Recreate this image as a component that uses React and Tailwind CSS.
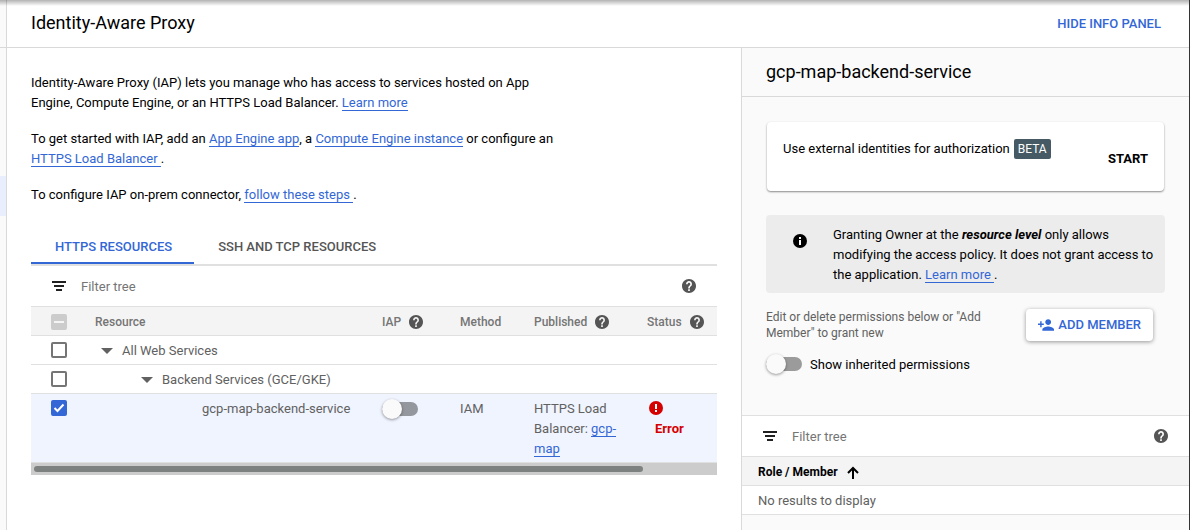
import { useState } from "react";

function HelpIcon() {
  return (
    <svg viewBox="2 2 20 20" className="size-3.5 shrink-0 fill-[#555555]" aria-hidden="true">
      <path d="M12 2C6.48 2 2 6.48 2 12s4.48 10 10 10 10-4.48 10-10S17.52 2 12 2zm1.2 17h-2.4v-2.4h2.4V19zm2.3-7.5-.9.92c-.82.82-1.4 1.4-1.4 3.08h-2.4v-.6c0-1.1.5-2 1.2-2.8l1.3-1.3c.4-.35.6-.8.6-1.4 0-1-.9-1.9-1.9-1.9s-1.9.9-1.9 1.9H7.8C7.800 6.900 9.700 5 12 5s4.200 1.900 4.200 4.200c0 .9-.3 1.700-.7 2.300z" />
    </svg>
  );
}

function HelpButton({ label }) {
  return (
    <button type="button" aria-label={label} className="flex shrink-0 cursor-pointer">
      <HelpIcon />
    </button>
  );
}

function FilterIcon() {
  return (
    <svg viewBox="0 0 14 10" className="h-2.5 w-3.5 shrink-0 fill-[#212121]" aria-hidden="true">
      <path d="M0 0h14v2H0zM2 4h10v2H2zM4 8h6v2H4z" />
    </svg>
  );
}

function Caret() {
  return (
    <svg viewBox="0 0 12 6" className="h-1.5 w-3 fill-[#616161]" aria-hidden="true">
      <path d="M0 0h12L6 6z" />
    </svg>
  );
}

function TextLink({ children }) {
  return (
    <a href="#" className="border-b border-[#3367d6] text-[#3367d6]">
      {children}
    </a>
  );
}

function Checkbox({ label, defaultChecked = false }) {
  return (
    <span className="relative flex size-4">
      <input
        type="checkbox"
        aria-label={label}
        defaultChecked={defaultChecked}
        className="peer size-4 appearance-none rounded-xs border-2 border-[#757575] bg-white checked:border-[#3367d6] checked:bg-[#3367d6]"
      />
      <svg
        viewBox="0 0 16 16"
        className="pointer-events-none absolute inset-0 hidden size-4 fill-none stroke-white stroke-2 peer-checked:block"
        aria-hidden="true"
      >
        <path d="M3.500 8l3 3L12.500 4.500" />
      </svg>
    </span>
  );
}

function MixedCheckbox({ label }) {
  return (
    <span className="relative flex size-4">
      <input
        type="checkbox"
        disabled
        aria-label={label}
        className="size-4 appearance-none rounded-xs bg-[#cccccc]"
      />
      <svg viewBox="0 0 16 16" className="pointer-events-none absolute inset-0 size-4 fill-[#f4f4f4]" aria-hidden="true">
        <path d="M3 7h10v2H3z" />
      </svg>
    </span>
  );
}

function Toggle({ id, label }) {
  return (
    <span className="relative flex h-5 w-9 items-center">
      <input
        id={id}
        type="checkbox"
        role="switch"
        aria-label={label}
        className="peer h-3.5 w-9 appearance-none rounded-full bg-black/38 checked:bg-[#3367d6]/50"
      />
      <span className="pointer-events-none absolute top-0 left-0 size-5 rounded-full bg-[#fafafa] shadow-[0_1px_3px_rgba(0,0,0,0.4)] peer-checked:left-4" />
    </span>
  );
}

function FilterBar({ id, className }) {
  return (
    <div className={"flex h-10 items-center bg-white " + className}>
      <label htmlFor={id} aria-label="Filter tree" className="shrink-0">
        <FilterIcon />
      </label>
      <input
        id={id}
        type="text"
        placeholder="Filter tree"
        className="ml-[15px] min-w-0 flex-1 pt-0.5 outline-none placeholder:text-[#757575]"
      />
      <HelpButton label="Filter help" />
    </div>
  );
}

function Intro() {
  return (
    <div className="flex max-w-[530px] flex-col gap-4">
      <p>
        Identity-Aware Proxy (IAP) lets you manage who has access to services hosted on App Engine,
        Compute Engine, or an HTTPS Load Balancer. <TextLink>Learn more</TextLink>
      </p>
      <p>
        To get started with IAP, add an <TextLink>App Engine app</TextLink>, a{" "}
        <TextLink>Compute Engine instance</TextLink> or configure an{" "}
        <TextLink>HTTPS Load Balancer </TextLink>.
      </p>
      <p>
        To configure IAP on-prem connector, <TextLink>follow these steps </TextLink>.
      </p>
    </div>
  );
}

function Tabs() {
  const [active, setActive] = useState("HTTPS RESOURCES");
  return (
    <div role="tablist" className="mt-6 flex border-b-2 border-[#e0e0e0]">
      {["HTTPS RESOURCES", "SSH AND TCP RESOURCES"].map((name) => (
        <button
          key={name}
          type="button"
          role="tab"
          aria-selected={active === name}
          onClick={() => setActive(name)}
          className="h-[35px] cursor-pointer border-b-2 border-transparent px-6 pt-0.5 font-medium text-[#555555] first:pr-[22px] aria-selected:border-[#3367d6] aria-selected:text-[#3367d6]"
        >
          {name}
        </button>
      ))}
    </div>
  );
}

const cell = "border-b border-[#e0e0e0] pt-[5px] pb-[3px] align-top";
const checkCell = "border-b border-[#e0e0e0] pt-1.5 pb-1.5 pl-5 align-top";
const head =
  "border-y border-[#e0e0e0] bg-[#f4f4f4] pt-[5px] pb-[3px] text-left text-xs/5 font-medium text-[#757575]";

function ResourceTable() {
  return (
    <table className="w-full table-fixed border-separate border-spacing-0 text-[#616161]">
      <colgroup>
        <col className="w-16" />
        <col />
        <col className="w-[78px]" />
        <col className="w-[74px]" />
        <col className="w-[113px]" />
        <col className="w-[70px]" />
      </colgroup>
      <thead>
        <tr>
          <th className={head + " pl-5"}>
            <div className="flex h-5 items-center">
              <MixedCheckbox label="Select all resources" />
            </div>
          </th>
          <th className={head}>Resource</th>
          <th className={head}>
            <span className="flex items-center gap-2">
              IAP <HelpButton label="About IAP" />
            </span>
          </th>
          <th className={head}>Method</th>
          <th className={head}>
            <span className="flex items-center gap-2">
              Published <HelpButton label="About published" />
            </span>
          </th>
          <th className={head}>
            <span className="flex items-center gap-2">
              Status <HelpButton label="About status" />
            </span>
          </th>
        </tr>
      </thead>
      <tbody>
        <tr>
          <td className={checkCell}>
            <Checkbox label="Select All Web Services" />
          </td>
          <td className={cell} colSpan={5}>
            <div className="flex items-center gap-[9px] pl-1.5">
              <button type="button" aria-label="Collapse All Web Services">
                <Caret />
              </button>
              All Web Services
            </div>
          </td>
        </tr>
        <tr>
          <td className={checkCell}>
            <Checkbox label="Select Backend Services" />
          </td>
          <td className={cell} colSpan={5}>
            <div className="flex items-center gap-[9px] pl-[46px]">
              <button type="button" aria-label="Collapse Backend Services">
                <Caret />
              </button>
              Backend Services (GCE/GKE)
            </div>
          </td>
        </tr>
        <tr className="bg-[#f0f4ff]">
          <td className={checkCell}>
            <Checkbox label="Select gcp-map-backend-service" defaultChecked />
          </td>
          <td className={cell + " pl-[107px]"}>gcp-map-backend-service</td>
          <td className={cell}>
            <Toggle id="iap-toggle" label="IAP for gcp-map-backend-service" />
          </td>
          <td className={cell}>IAM</td>
          <td className={cell + " pr-6"}>
            HTTPS Load Balancer: <TextLink>gcp-map</TextLink>
          </td>
          <td className={cell}>
            <div className="flex h-5 items-center pb-0.5 pl-0.5">
              <svg viewBox="0 0 14 14" className="size-3.5 fill-[#d50000]" aria-hidden="true">
                <circle cx="7" cy="7" r="7" />
                <path d="M6 3h2v5H6zM6 9h2v2H6z" className="fill-white" />
              </svg>
            </div>
            <div className="pl-2 font-bold text-[#d50000]">Error</div>
          </td>
        </tr>
      </tbody>
    </table>
  );
}

function InfoPanel() {
  return (
    <aside className="flex w-[448px] shrink-0 flex-col border-l border-[#d9d9d9] bg-[#fafafa]">
      <h2 className="border-b border-[#d9d9d9] px-6 py-3 text-lg/6">gcp-map-backend-service</h2>
      <div className="px-6 pt-6 pb-10">
        <div className="m-px flex items-center justify-between rounded-sm bg-white px-4 shadow-[0_1px_2px_rgba(0,0,0,0.45)]">
          <p className="flex gap-1 pt-[17px] pb-8">
            Use external identities for authorization
            <span className="rounded-xs bg-[#455a64] px-1 text-xs/5 text-white">BETA</span>
          </p>
          <button type="button" className="cursor-pointer pt-1 font-bold">
            START
          </button>
        </div>
        <div className="mt-6 flex items-start rounded-sm bg-[#ececec] pt-2.5 pr-2 pb-2">
          <svg viewBox="0 0 14 14" className="mt-[9px] mr-[26px] ml-[27px] size-3.5 shrink-0" aria-hidden="true">
            <circle cx="7" cy="7" r="7" />
            <path d="M6 3h2v2H6zM6 6h2v5H6z" className="fill-white" />
          </svg>
          <p>
            Granting Owner at the <em className="font-bold">resource level</em> only allows modifying the access
            policy. It does not grant access to the application. <TextLink>Learn more </TextLink>.
          </p>
        </div>
        <div className="mt-4 flex items-center justify-between pr-3">
          <p className="max-w-[232px] text-xs/4 text-[#616161]">
            Edit or delete permissions below or "Add Member" to grant new
          </p>
          <button
            type="button"
            className="flex h-8 cursor-pointer items-center gap-1 rounded-sm bg-white px-3 font-medium text-[#3367d6] shadow-[0_1px_4px_rgba(0,0,0,0.4)]"
          >
            <svg viewBox="1 4 22 16" className="h-3 w-4 fill-[#3367d6]" aria-hidden="true">
              <path d="M15 12c2.210 0 4-1.790 4-4s-1.790-4-4-4-4 1.790-4 4 1.790 4 4 4zm-9-2V7H4v3H1v2h3v3h2v-3h3v-2H6zm9 4c-2.670 0-8 1.340-8 4v2h16v-2c0-2.660-5.330-4-8-4z" />
            </svg>
            ADD MEMBER
          </button>
        </div>
        <div className="mt-3 flex items-center gap-2">
          <Toggle id="inherited" label="Show inherited permissions" />
          <label htmlFor="inherited" className="pt-0.5">
            Show inherited permissions
          </label>
        </div>
      </div>
      <FilterBar id="member-filter" className="box-content border-t border-[#e0e0e0] pr-[21px] pl-[21px]" />
      <table className="w-full border-separate border-spacing-0">
        <thead>
          <tr>
            <th className="border-y border-[#e0e0e0] bg-[#f4f4f4] px-4 pt-[5px] pb-[3px] text-left text-xs/5 font-bold">
              <button type="button" className="flex cursor-pointer items-center gap-[9px]">
                Role / Member
                <svg viewBox="0 0 12 13" className="h-[13px] w-3 fill-none stroke-black stroke-2" aria-hidden="true">
                  <path d="M6 13V2M1 7l5-5 5 5" />
                </svg>
              </button>
            </th>
          </tr>
        </thead>
        <tbody>
          <tr>
            <td className="border-b border-[#e0e0e0] bg-white px-4 pt-[5px] pb-[3px] text-[#616161]">
              No results to display
            </td>
          </tr>
        </tbody>
      </table>
    </aside>
  );
}

export default function App() {
  return (
    <div className="relative flex min-h-screen border-r border-[#333333] bg-white font-['Roboto',sans-serif] text-[13px]/5 text-black">
      <div className="pointer-events-none absolute inset-x-0 top-0 h-1.5 bg-linear-to-b from-black/30 to-transparent" />
      <nav aria-label="Sections" className="w-[7px] shrink-0 border-r border-[#d9d9d9] bg-[#fafafa]">
        <div className="h-12 border-b border-[#d9d9d9]" />
        <div className="mt-32 h-10 bg-[#e8eefc]" />
      </nav>
      <div className="flex min-w-0 flex-1 flex-col">
        <header className="flex h-12 items-center justify-between border-b border-[#d9d9d9] pr-7 pb-0.5 pl-6">
          <h1 className="text-lg/6">Identity-Aware Proxy</h1>
          <button type="button" className="cursor-pointer pt-0.5 font-medium text-[#3367d6]">
            HIDE INFO PANEL
          </button>
        </header>
        <div className="flex flex-1">
          <main className="min-w-0 flex-1 px-6 pt-[25px]">
            <Intro />
            <Tabs />
            <FilterBar id="resource-filter" className="pr-[21px] pl-[21px]" />
            <ResourceTable />
            <div className="h-3 bg-[#cccccc] px-[3px] py-[3px]">
              <div className="h-1.5 w-[89.5%] rounded-full bg-[#7d8180]" />
            </div>
          </main>
          <InfoPanel />
        </div>
      </div>
    </div>
  );
}
